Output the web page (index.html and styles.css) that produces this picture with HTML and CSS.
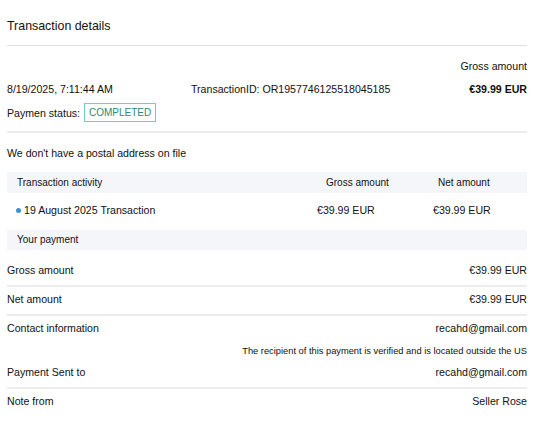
FILE: index.html
```html
<!DOCTYPE html>
<html>
<head>
<meta charset="utf-8">
<link rel="stylesheet" href="styles.css">
</head>
<body>
<div class="page">
  <div class="title">Transaction details</div>
  <div class="summary">
    <div class="gross-label">Gross amount</div>
    <div class="info-row">
      <span class="date">8/19/2025, 7:11:44 AM</span>
      <span class="txid">TransactionID: OR1957746125518045185</span>
      <span class="amount-bold">€39.99 EUR</span>
    </div>
    <div class="status-row">
      <span>Paymen status:</span>
      <span class="badge">COMPLETED</span>
    </div>
  </div>
  <div class="postal">We don't have a postal address on file</div>
  <div class="activity">
    <div class="act-head">
      <span class="c1">Transaction activity</span>
      <span class="c2">Gross amount</span>
      <span class="c3">Net amount</span>
    </div>
    <div class="act-row">
      <span class="c1"><span class="dot"></span>19 August 2025 Transaction</span>
      <span class="c2">€39.99 EUR</span>
      <span class="c3">€39.99 EUR</span>
    </div>
  </div>
  <div class="your-payment">Your payment</div>
  <div class="pay-row first lined"><span>Gross amount</span><span>€39.99 EUR</span></div>
  <div class="pay-row lined"><span>Net amount</span><span>€39.99 EUR</span></div>
  <div class="pay-row"><span>Contact information</span><span>recahd@gmail.com</span></div>
  <div class="note-small">The recipient of this payment is verified and is located outside the US</div>
  <div class="pay-row sent lined"><span>Payment Sent to</span><span>recahd@gmail.com</span></div>
  <div class="pay-row"><span>Note from</span><span>Seller Rose</span></div>
</div>
</body>
</html>
```
FILE: styles.css
```css
html, body {
  margin: 0;
  padding: 0;
  background: #ffffff;
}
body {
  font-family: "Liberation Sans", Arial, sans-serif;
  color: #111111;
  font-size: 10.6px;
}
.page {
  padding: 0 6px 0 7px;
}
.title {
  font-size: 12.4px;
  line-height: 16px;
  padding: 18px 0 11px;
  border-bottom: 1px solid #dedede;
}
.summary {
  padding-top: 14px;
  border-bottom: 2px solid #ececec;
  padding-bottom: 9px;
}
.gross-label {
  text-align: right;
  line-height: 12px;
}
.info-row {
  display: grid;
  grid-template-columns: 184px 1fr auto;
  line-height: 12px;
  margin-top: 11px;
}
.amount-bold {
  font-weight: bold;
}
.status-row {
  display: flex;
  align-items: center;
  gap: 4px;
  margin-top: 8px;
  height: 19px;
}
.badge {
  font-size: 10px;
  line-height: 13px;
  padding: 2px 4px;
  border: 1px solid #6dd2bb;
  color: #2a8a75;
}
.postal {
  line-height: 14px;
  margin-top: 13px;
}
.activity {
  margin-top: 12px;
}
.act-head, .act-row {
  display: grid;
  grid-template-columns: 310px 116px 1fr;
}
.act-head {
  background: #f5f6fa;
  font-size: 10px;
  line-height: 21px;
}
.act-head .c1 { padding-left: 10px; }
.act-head .c2 { padding-left: 9px; }
.act-head .c3 { padding-left: 5px; }
.act-row {
  line-height: 14px;
  padding: 10px 0 13px;
}
.act-row .c1 {
  display: flex;
  align-items: center;
  padding-left: 9px;
}
.dot {
  width: 5px;
  height: 5px;
  border-radius: 50%;
  background: #3d8fd1;
  margin-right: 3px;
  margin-top: 1px;
}
.your-payment {
  background: #f5f6fa;
  font-size: 10px;
  line-height: 20px;
  padding-left: 10px;
}
.pay-row {
  display: flex;
  justify-content: space-between;
  line-height: 12px;
  padding: 6px 0 11px;
}
.pay-row.first {
  padding-top: 14px;
}
.pay-row.lined {
  border-bottom: 2px solid #ededed;
  padding-bottom: 9px;
}
.note-small {
  text-align: right;
  font-size: 9.3px;
  line-height: 12px;
  margin-top: 0;
}
.pay-row.sent {
  padding-top: 9px;
}
```
